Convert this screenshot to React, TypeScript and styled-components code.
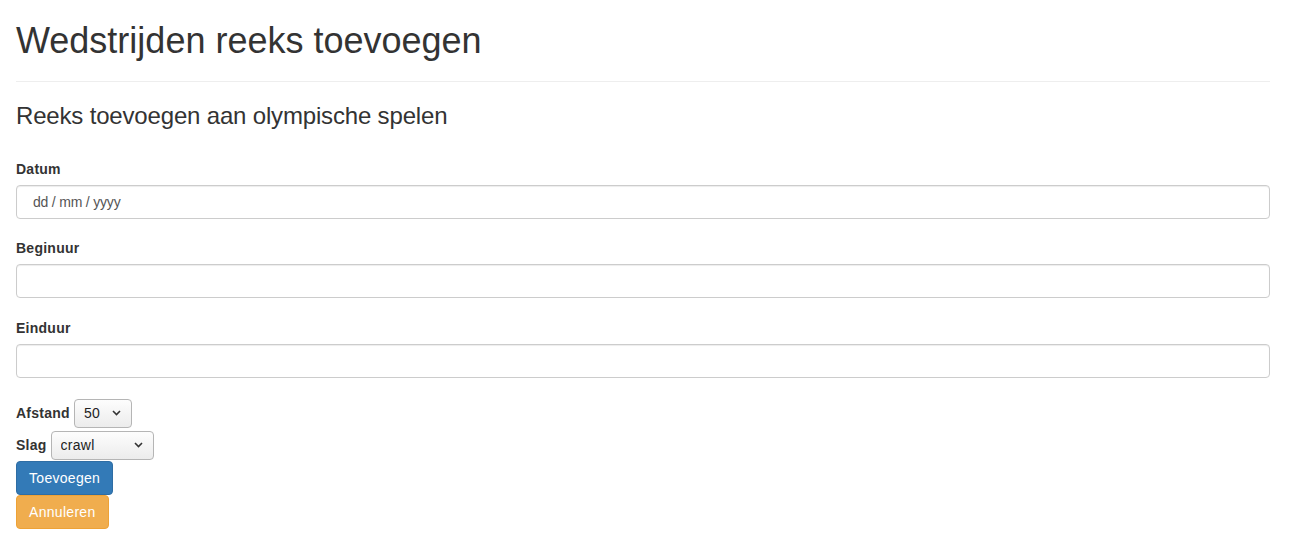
import React from "react";
import styled, { createGlobalStyle } from "styled-components";

const GlobalStyle = createGlobalStyle`
  html, body {
    margin: 0;
    padding: 0;
    background: #fff;
  }
  body {
    font-family: "Liberation Sans", Arial, Helvetica, sans-serif;
    font-size: 14px;
    line-height: 1.42857143;
    color: #333;
  }
  * { box-sizing: border-box; }
`;

const Container = styled.div`
  padding: 0 38px 0 16px;
`;

const PageHeader = styled.div`
  padding-top: 21px;
  padding-bottom: 20px;
  border-bottom: 1px solid #eee;
`;

const Title = styled.h1`
  margin: 0;
  font-size: 36px;
  font-weight: 500;
  line-height: 1.1;
  color: #333;
`;

const SubTitle = styled.h3`
  margin: 21px 0 30px;
  font-size: 24px;
  font-weight: 500;
  line-height: 1.1;
  letter-spacing: -0.17px;
  color: #333;
`;

const FormGroup = styled.div`
  margin-bottom: 19.5px;
`;

const Label = styled.label`
  display: block;
  margin-bottom: 6px;
  font-weight: 700;
  line-height: 20px;
  letter-spacing: 0.25px;
`;

const Input = styled.input<{ $date?: boolean }>`
  display: block;
  width: 100%;
  height: 34px;
  padding: 6px 12px 6px ${(p) => (p.$date ? "16px" : "12px")};
  font-family: "Liberation Sans", Arial, sans-serif;
  font-size: 14px;
  line-height: 20px;
  color: #555;
  background: #fff;
  border: 1px solid #ccc;
  border-radius: 4px;
  box-shadow: inset 0 1px 1px rgba(0, 0, 0, 0.075);
  outline: none;
  &::placeholder {
    color: #555;
    letter-spacing: -0.2px;
  }
`;

const InlineRow = styled.div`
  display: flex;
  align-items: center;
  height: 32px;
  gap: 4px;
`;

const InlineLabel = styled.label`
  font-weight: 700;
  line-height: 20px;
  letter-spacing: 0.25px;
`;

const SelectWrap = styled.div<{ $width: number }>`
  position: relative;
  width: ${(p) => p.$width}px;
  height: 29px;
`;

const Select = styled.select`
  appearance: none;
  -webkit-appearance: none;
  width: 100%;
  height: 100%;
  padding: 0 20px 0 9px;
  font-family: "Liberation Sans", Arial, sans-serif;
  font-size: 14px;
  letter-spacing: 0.25px;
  color: #222;
  background: linear-gradient(#fdfdfd, #ececec);
  border: 1px solid #b5b5b5;
  border-radius: 4px;
  outline: none;
`;

const Chevron = styled.svg`
  position: absolute;
  right: 11px;
  top: 11px;
  width: 9px;
  height: 6px;
  pointer-events: none;
`;

const Button = styled.button<{ $variant: "primary" | "warning" }>`
  display: block;
  padding: 6px 12px;
  font-family: "Liberation Sans", Arial, sans-serif;
  font-size: 14px;
  line-height: 20px;
  letter-spacing: 0.3px;
  color: #fff;
  border-radius: 4px;
  border: 1px solid
    ${(p) => (p.$variant === "primary" ? "#2e6da4" : "#eea236")};
  background: ${(p) => (p.$variant === "primary" ? "#337ab7" : "#f0ad4e")};
  cursor: pointer;
`;

const ChevronIcon = () => (
  <Chevron viewBox="0 0 9 6">
    <path d="M1 1 L4.5 4.5 L8 1" fill="none" stroke="#333" strokeWidth="1.6" />
  </Chevron>
);

export default function App() {
  return (
    <>
      <GlobalStyle />
      <Container>
        <PageHeader>
          <Title>Wedstrijden reeks toevoegen</Title>
        </PageHeader>
        <SubTitle>Reeks toevoegen aan olympische spelen</SubTitle>
        <form onSubmit={(e) => e.preventDefault()}>
          <FormGroup>
            <Label htmlFor="datum">Datum</Label>
            <Input id="datum" $date placeholder="dd / mm / yyyy" />
          </FormGroup>
          <FormGroup>
            <Label htmlFor="begin">Beginuur</Label>
            <Input id="begin" />
          </FormGroup>
          <FormGroup>
            <Label htmlFor="eind">Einduur</Label>
            <Input id="eind" />
          </FormGroup>
          <InlineRow>
            <InlineLabel htmlFor="afstand">Afstand</InlineLabel>
            <SelectWrap $width={58}>
              <Select id="afstand" defaultValue="50">
                <option value="50">50</option>
                <option value="100">100</option>
                <option value="200">200</option>
              </Select>
              <ChevronIcon />
            </SelectWrap>
          </InlineRow>
          <InlineRow>
            <InlineLabel htmlFor="slag">Slag</InlineLabel>
            <SelectWrap $width={103}>
              <Select id="slag" defaultValue="crawl">
                <option value="crawl">crawl</option>
                <option value="schoolslag">schoolslag</option>
                <option value="rugslag">rugslag</option>
                <option value="vlinderslag">vlinderslag</option>
              </Select>
              <ChevronIcon />
            </SelectWrap>
          </InlineRow>
          <Button type="submit" $variant="primary">Toevoegen</Button>
          <Button type="button" $variant="warning">Annuleren</Button>
        </form>
      </Container>
    </>
  );
}
